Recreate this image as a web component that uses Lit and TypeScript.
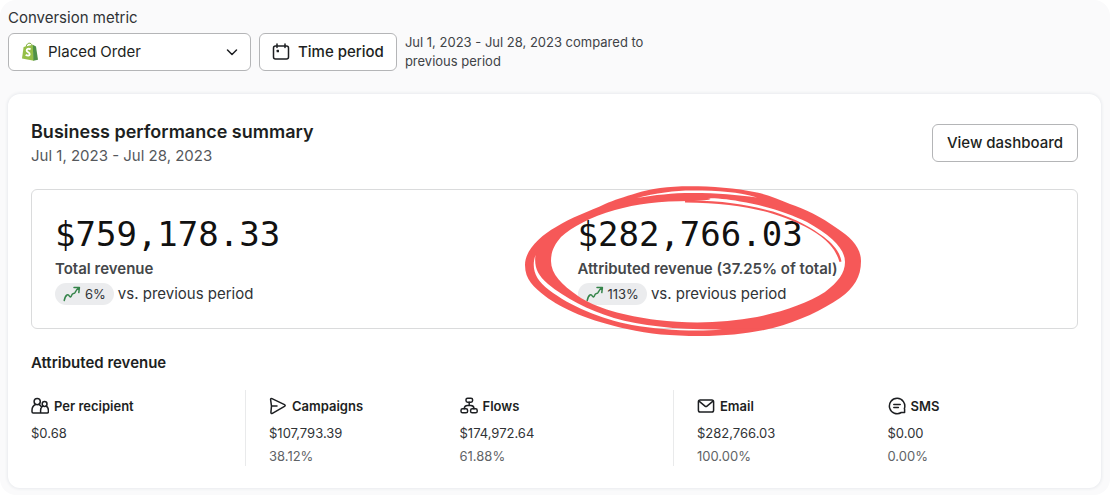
import { LitElement, html, css, svg, TemplateResult } from "lit";
import { customElement, property } from "lit/decorators.js";

const ICONS: Record<string, TemplateResult> = {
  people: svg`<circle cx="6.2" cy="4.6" r="3.1"/><circle cx="13.6" cy="7" r="2.4"/>
    <path d="M9.6 16H2.2Q1 16 1 14.8V13.200Q1 9 4.600 7.500M7.800 7.500Q9.600 8.300 10.300 9.800M9.600 16V13.200Q9.600 10.600 12 9M9.600 16H16.200Q17.400 16 17.400 14.800V13.200Q17.400 10.400 15.200 9"/>`,
  send: svg`<path d="M1.600 2.600Q1.500 1 3 1.600L15.500 7.700Q16.900 8.500 15.500 9.400L3.400 16.300Q1.800 17 1.900 15.400L2.500 9.100ZM2.500 9.100H8"/>`,
  flow: svg`<rect x="6" y="1.200" width="6.600" height="4" rx="1.600"/><rect x="1" y="11.800" width="6.600" height="4" rx="1.600"/><rect x="10.600" y="11.800" width="6.600" height="4" rx="1.600"/>
    <path d="M9.200 5.200V7.800M4.300 11.800Q4.300 8.500 7.500 8.500H10.900Q14 8.500 14 11.800"/>`,
  mail: svg`<rect x="1.400" y="3" width="15.200" height="12" rx="1.800"/><path d="M2 4.200L8 9.200Q9 10 10 9.200L16 4.200"/>`,
  chat: svg`<path d="M16.400 11.500A7.700 7.700 0 1 0 13.300 15.500H16.600V12.300ZM5.800 7.500H12.200M5.800 10.500H10.400"/>`,
  calendar: svg`<rect x="1.500" y="3" width="15" height="13" rx="2"/><path d="M5 1V4.500M13 1V4.500"/><rect class="dot" x="4.600" y="6.800" width="2.400" height="2.400" rx=".5"/>`,
  trend: svg`<path d="M1.200 15.500Q2.200 11 4 10Q5.500 9.300 6.400 11.200Q7.400 12.800 8.400 10.800Q9.200 8.500 10.500 8.500Q11.800 8.500 12.200 7.200Q12.800 5 16 3M11 2.600L16.400 2.600L15.800 7.600"/>`,
  chevron: svg`<path d="M4.500 7L9 11.500L13.500 7"/>`,
};

@customElement("line-icon")
export class LineIcon extends LitElement {
  static styles = css`
    :host { display: block; flex: none; width: 18px; height: 18px; }
    .icon { display: block; width: 100%; height: 100%; fill: none; stroke: currentColor; stroke-width: 1.5; stroke-linecap: round; stroke-linejoin: round; }
    .dot { fill: currentColor; stroke: none; }
  `;
  @property() name = "";
  render() {
    return html`<svg class="icon" viewBox="0 0 18 18" aria-hidden="true">${ICONS[this.name]}</svg>`;
  }
}

@customElement("scribble-ring")
export class ScribbleRing extends LitElement {
  static styles = css`
    :host { display: block; width: 338px; height: 152px; pointer-events: none; }
    .ring { display: block; width: 100%; height: 100%; fill: #f65353; fill-opacity: 0.97; fill-rule: evenodd; }
  `;
  render() {
    return html`<svg class="ring" viewBox="524 185 338 152" aria-hidden="true">
      <path d="M690 186.300C668 186.300 650 189 637 193C624 197 614 200 605 204C590 211 570 218 556 227C540 236 525 250 525 265C525 280 534 287 545 296C562 309 590 321 627 329C650 334 670 336 700 336C728 336 752 333 773 328C800 321 822 310 840 298C854 288 861 277 861 261C861 247 850 237 838 229C820 216 805 209 790 204C778 199 768 195 757 192.500C735 188 712 186.300 690 186.300Z
        M690 201C660 201 636 204 615 210C590 217 572 227 561 237C554 245 551 252 551 261C551 274 562 285 578 296C595 308 625 316 657 320C690 324 725 323 757 317C785 311 808 303 825 292C838 282 845 273 845 262C845 249 832 236 807 222C790 214 768 206 740 201.500C728 199 715 198.300 708 198.300C716 199.300 703 201 690 201Z
        M535.500 255C534 266 537 275 548 284C565 298 588 310 614 318C642 326 680 330 722 329.500C695 332 660 330 632 325C601 319 570 306 549 290C535 280 531 268 535.500 255Z
        M637 198C655 193 675 190.500 692 190.500C720 190.500 738 192 757 197.500C737 195 718 193 692 193C672 193 655 195 637 198Z"/>
      <path d="M685 200.500C725 200 753 206 773 211.500C797 219 812 228 824 237C833 244 840 252 841.500 261.500L839.500 262C836 250 829 243 821 236.500C808 227 793 220 772 213.500C750 207 722 203 685 202.500Z"/>
    </svg>`;
  }
}

interface Stat { icon: string; name: string; value: string; share?: string; }

@customElement("app-root")
export class AppRoot extends LitElement {
  static styles = css`
    :host { display: block; background: #fff; color: #1d1f22; font: 15px/20px Inter, "Liberation Sans", sans-serif; }
    * { box-sizing: border-box; }
    h2, h3, h4, p { margin: 0; }
    .page { background: #fafafb; border-radius: 16px; padding: 8px 9px 7px 8px; }
    .label { display: block; margin-bottom: 5px; color: #303336; }
    .filters { display: flex; gap: 8px; align-items: center; margin-bottom: 23px; }
    .picker { display: grid; align-items: center; width: 243px; color: #1d1f22; }
    .picker > * { grid-area: 1 / 1; }
    .picker line-icon { justify-self: end; margin-right: 10px; pointer-events: none; }
    .shop { width: 18px; height: 20px; margin-left: 13px; pointer-events: none; }
    select, button { height: 38px; border: 1px solid #b4b5b7; border-radius: 6px; background: #fff; color: inherit; font: inherit; }
    select { appearance: none; width: 100%; padding: 0 36px 0 39px; }
    button { display: flex; align-items: center; gap: 8px; padding: 0 14px; font-weight: 500; white-space: nowrap; }
    .filters button { padding: 0 12px; }
    .range { max-width: 260px; font-size: 13px; line-height: 19px; color: #404347; }
    .card { background: #fff; border-radius: 12px; padding: 25px 0 22px 23px; box-shadow: 0 0 3px 1px #e9ebee; }
    .head { display: flex; justify-content: space-between; align-items: center; margin: 0 23px 22px 0; }
    .title { font-size: 18px; line-height: 26px; font-weight: 600; }
    .sub { line-height: 22px; color: #55585c; }
    .metrics { display: grid; grid-template-columns: 1fr 1fr; margin-right: 23px; border: 1px solid #dadbdc; border-radius: 6px; }
    .metric { position: relative; padding: 23px; }
    .amount { font: 34px/42px "DejaVu Sans Mono", monospace; color: #111; white-space: nowrap; }
    .name { margin-top: 4px; font-weight: 600; color: #44474a; }
    .change { display: flex; align-items: center; gap: 4px; margin-top: 4px; color: #303336; }
    .pill { display: flex; align-items: center; gap: 4px; height: 22px; padding: 0 8px; border-radius: 11px; background: #ebecee; font-size: 13px; }
    .pill line-icon { color: #35844a; }
    .ring { position: absolute; top: -5px; left: -31px; }
    .section { margin: 24px 0 17px; font-size: 15px; font-weight: 600; }
    .groups { display: grid; grid-template-columns: 1fr 2fr 2fr; }
    .group { display: grid; grid-template-columns: 1fr 1fr; padding: 6px 23px 0; border-left: 1px solid #e9eaeb; min-height: 76px; font-size: 13px; }
    .group:first-child { grid-template-columns: 1fr; padding-left: 0; border-left: 0; }
    .stat-name { display: flex; align-items: center; gap: 5px; font-size: 13px; font-weight: 600; }
    .value { margin-top: 7px; color: #303336; }
    .share { margin-top: 3px; color: #606366; }
  `;

  private groups: Stat[][] = [
    [{ icon: "people", name: "Per recipient", value: "$0.68" }],
    [
      { icon: "send", name: "Campaigns", value: "$107,793.39", share: "38.12%" },
      { icon: "flow", name: "Flows", value: "$174,972.64", share: "61.88%" },
    ],
    [
      { icon: "mail", name: "Email", value: "$282,766.03", share: "100.00%" },
      { icon: "chat", name: "SMS", value: "$0.00", share: "0.00%" },
    ],
  ];

  private metric(amount: string, name: string, change: string, ringed = false) {
    return html`<div class="metric">
      <p class="amount">${amount}</p>
      <p class="name">${name}</p>
      <p class="change"><span class="pill"><line-icon name="trend"></line-icon>${change}</span> vs. previous period</p>
      ${ringed ? html`<scribble-ring class="ring"></scribble-ring>` : ""}
    </div>`;
  }

  render() {
    return html`<main class="page">
      <label class="label" for="metric">Conversion metric</label>
      <div class="filters">
        <div class="picker">
          <select id="metric"><option>Placed Order</option></select>
          <svg class="shop" viewBox="0 0 18 20" aria-hidden="true">
            <path d="M5 5C5.500 2 7.500 .8 9 1.200C10.500 1.600 11 3 11.200 4.500" fill="none" stroke="#7fae3c"/>
            <path d="M2.600 5L11.800 2.800L13 18.800L1 16.600Z" fill="#95bf47"/>
            <path d="M11.800 2.800L15 4.600L17 17.800L12.400 18.800Z" fill="#4f9148"/>
            <path d="M9.600 7.300C7.500 6.200 5.500 7 5.700 8.600C5.900 10.400 8.900 10.300 8.700 12.300C8.500 14 6.300 14 4.700 12.700" fill="none" stroke="#fff" stroke-width="1.900"/>
          </svg>
          <line-icon name="chevron"></line-icon>
        </div>
        <button type="button"><line-icon name="calendar"></line-icon>Time period</button>
        <p class="range">Jul 1, 2023 - Jul 28, 2023 compared to previous period</p>
      </div>
      <section class="card">
        <div class="head">
          <div>
            <h2 class="title">Business performance summary</h2>
            <p class="sub">Jul 1, 2023 - Jul 28, 2023</p>
          </div>
          <button type="button">View dashboard</button>
        </div>
        <div class="metrics">
          ${this.metric("$759,178.33", "Total revenue", "6%")}
          ${this.metric("$282,766.03", "Attributed revenue (37.25% of total)", "113%", true)}
        </div>
        <h3 class="section">Attributed revenue</h3>
        <div class="groups">
          ${this.groups.map((group) => html`<div class="group">
            ${group.map((s) => html`<div>
              <h4 class="stat-name"><line-icon name=${s.icon}></line-icon>${s.name}</h4>
              <p class="value">${s.value}</p>
              ${s.share ? html`<p class="share">${s.share}</p>` : ""}
            </div>`)}
          </div>`)}
        </div>
      </section>
    </main>`;
  }
}
